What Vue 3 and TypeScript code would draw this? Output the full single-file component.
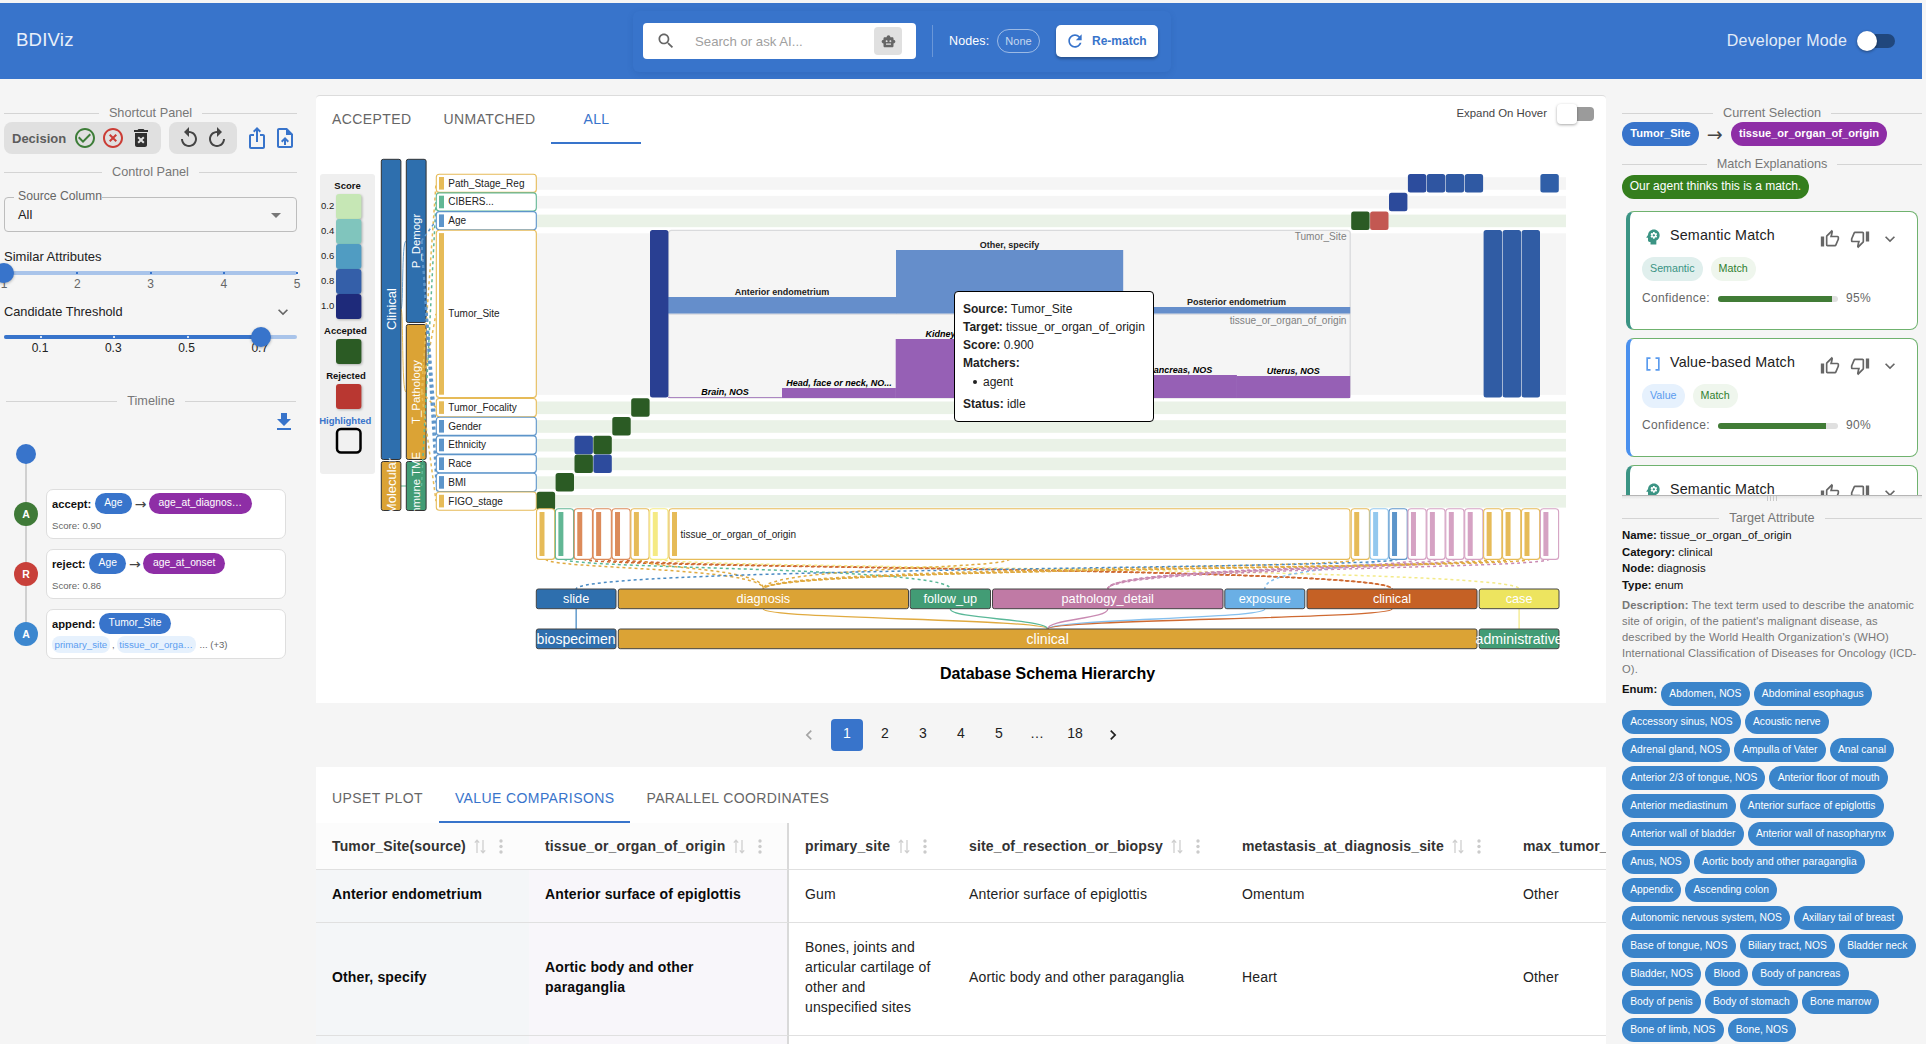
<script setup lang="ts">
interface Band { label: string; y: number; h: number; color: string; node: number; accepted: boolean }
interface Cell { x: number; row: number; fill: string }
interface Node { label: string; x: number; w: number; fill: string }

const icons = {
  search: 'M15.5 14h-.79l-.28-.27C15.41 12.59 16 11.11 16 9.5 16 5.91 13.09 3 9.5 3S3 5.91 3 9.5 5.91 16 9.5 16c1.61 0 3.09-.59 4.23-1.57l.27.28v.79l5 4.99L20.49 19l-4.99-5zm-6 0C7.01 14 5 11.99 5 9.5S7.01 5 9.5 5 14 7.01 14 9.5 11.99 14 9.5 14z',
  robot: 'M20 9V7c0-1.1-.9-2-2-2h-3c0-1.66-1.34-3-3-3S9 3.34 9 5H6c-1.1 0-2 .9-2 2v2c-1.66 0-3 1.34-3 3s1.34 3 3 3v4c0 1.1.9 2 2 2h12c1.1 0 2-.9 2-2v-4c1.66 0 3-1.34 3-3s-1.34-3-3-3M7.5 11.5c0-.83.67-1.5 1.5-1.5s1.5.67 1.5 1.5S9.83 13 9 13s-1.5-.67-1.5-1.5M16 17H8v-2h8zm-1-4c-.83 0-1.5-.67-1.5-1.5S14.17 10 15 10s1.5.67 1.5 1.5S15.83 13 15 13',
  refresh: 'M17.65 6.35C16.2 4.9 14.21 4 12 4c-4.42 0-7.99 3.58-7.99 8s3.57 8 7.99 8c3.73 0 6.84-2.55 7.73-6h-2.08c-.82 2.33-3.04 4-5.65 4-3.31 0-6-2.69-6-6s2.69-6 6-6c1.66 0 3.14.69 4.22 1.78L13 11h7V4z',
  check: 'M16.59 7.58 10 14.17l-3.59-3.58L5 12l5 5 8-8zM12 2C6.48 2 2 6.48 2 12s4.48 10 10 10 10-4.48 10-10S17.52 2 12 2m0 18c-4.42 0-8-3.58-8-8s3.58-8 8-8 8 3.58 8 8-3.58 8-8 8',
  cross: 'M14.59 8 12 10.59 9.41 8 8 9.41 10.59 12 8 14.59 9.41 16 12 13.41 14.59 16 16 14.59 13.41 12 16 9.41zM12 2C6.47 2 2 6.47 2 12s4.47 10 10 10 10-4.47 10-10S17.53 2 12 2m0 18c-4.41 0-8-3.59-8-8s3.59-8 8-8 8 3.59 8 8-3.59 8-8 8',
  trash: 'M6 19c0 1.1.9 2 2 2h8c1.1 0 2-.9 2-2V7H6zm2.46-7.12 1.41-1.41L12 12.59l2.12-2.12 1.41 1.41L13.41 14l2.12 2.12-1.41 1.41L12 15.41l-2.12 2.12-1.41-1.41L10.59 14zM15.5 4l-1-1h-5l-1 1H5v2h14V4z',
  replay: 'M12 5V1L7 6l5 5V7c3.31 0 6 2.69 6 6s-2.69 6-6 6-6-2.69-6-6H4c0 4.42 3.58 8 8 8s8-3.58 8-8-3.58-8-8-8',
  share: 'M16 5l-1.42 1.42-1.59-1.59V16h-1.98V4.83L9.42 6.42 8 5l4-4zm4 5v11c0 1.1-.9 2-2 2H6c-1.11 0-2-.9-2-2V10c0-1.11.89-2 2-2h3v2H6v11h12V10h-3V8h3c1.1 0 2 .89 2 2',
  upload: 'M14 2H6c-1.1 0-1.99.9-1.99 2L4 20c0 1.1.89 2 1.99 2H18c1.1 0 2-.9 2-2V8zm4 18H6V4h7v5h5zM8 15.01l1.41 1.41L11 14.84V19h2v-4.16l1.59 1.59L16 15.01 12.01 11z',
  download: 'M19 9h-4V3H9v6H5l7 7zM5 18v2h14v-2z',
  more: 'M16.59 8.59 12 13.17 7.41 8.59 6 10l6 6 6-6z',
  prev: 'M15.41 7.41 14 6l-6 6 6 6 1.41-1.41L10.83 12z',
  next: 'M10 6 8.59 7.41 13.17 12l-4.58 4.59L10 18l6-6z',
  drop: 'M7 10l5 5 5-5z',
  up: 'M9 21h9c.83 0 1.54-.5 1.84-1.22l3.02-7.05c.09-.23.14-.47.14-.73v-2c0-1.1-.9-2-2-2h-6.31l.95-4.57.03-.32c0-.41-.17-.79-.44-1.06L14.17 1 7.58 7.59C7.22 7.95 7 8.45 7 9v10c0 1.1.9 2 2 2M9 9l4.34-4.34L12 10h9v2l-3 7H9zM1 9h4v12H1z',
  down: 'M15 3H6c-.83 0-1.54.5-1.84 1.22l-3.02 7.05c-.09.23-.14.47-.14.73v2c0 1.1.9 2 2 2h6.31l-.95 4.57-.03.32c0 .41.17.79.44 1.06L9.83 23l6.59-6.59c.36-.36.58-.86.58-1.41V5c0-1.1-.9-2-2-2m0 12-4.34 4.34L12 14H3v-2l3-7h9zm4-12h4v12h-4z',
  array: 'M15 4v2h3v12h-3v2h5V4zM4 20h5v-2H6V6h3V4H4z',
  mind: 'M13 8.57c-.79 0-1.43.64-1.43 1.43s.64 1.43 1.43 1.43 1.43-.64 1.43-1.43-.64-1.43-1.43-1.43zM13 3C9.25 3 6.2 5.94 6.02 9.64L4.1 12.2c-.25.33-.01.8.4.8H6v3c0 1.1.9 2 2 2h1v3h7v-4.68c2.36-1.12 4-3.53 4-6.32 0-3.87-3.13-7-7-7zm3 7c0 .13-.01.26-.02.39l.83.66c.08.06.1.16.05.25l-.8 1.39c-.05.09-.16.12-.24.09l-.99-.4c-.21.16-.43.29-.67.39L14 13.83c-.01.1-.1.17-.2.17h-1.6c-.1 0-.18-.07-.2-.17l-.15-1.06c-.25-.1-.47-.23-.68-.39l-.99.4c-.09.03-.2 0-.25-.09l-.8-1.39c-.05-.08-.03-.19.05-.25l.84-.66c-.01-.13-.02-.26-.02-.39s.02-.27.04-.39l-.85-.66c-.08-.06-.1-.16-.05-.26l.8-1.38c.05-.09.15-.12.24-.09l1 .4c.2-.15.43-.29.67-.39L12 6.17c.02-.1.1-.17.2-.17h1.6c.1 0 .18.07.2.17l.15 1.06c.24.1.46.23.67.39l1-.4c.09-.03.2 0 .24.09l.8 1.38c.05.09.03.2-.05.26l-.85.66c.03.12.04.25.04.39z',
}

const ORANGE = '#e6bb58'
const GREEN = '#62b795'
const BLUE = '#5d95ca'
const RUST = '#dc8b5a'
const YELLOW = '#f5ea83'
const SKY = '#93c8ee'
const PINK = '#d5a2c3'

const scale = [
  { label: '0.2', fill: '#c6e7b5' },
  { label: '0.4', fill: '#80c5bd' },
  { label: '0.6', fill: '#509cc2' },
  { label: '0.8', fill: '#345fa9' },
  { label: '1.0', fill: '#1e2a7a' },
]

const bands: Band[] = [
  { label: 'Path_Stage_Reg', y: 174, h: 18.6, color: ORANGE, node: 392, accepted: false },
  { label: 'CIBERS...', y: 192.7, h: 18.6, color: GREEN, node: 486, accepted: false },
  { label: 'Age', y: 211.4, h: 18.6, color: BLUE, node: 241, accepted: true },
  { label: 'Tumor_Site', y: 230.1, h: 167.6, color: ORANGE, node: 392, accepted: false },
  { label: 'Tumor_Focality', y: 398.3, h: 18.6, color: ORANGE, node: 392, accepted: true },
  { label: 'Gender', y: 417, h: 18.6, color: BLUE, node: 241, accepted: true },
  { label: 'Ethnicity', y: 435.7, h: 18.6, color: BLUE, node: 241, accepted: true },
  { label: 'Race', y: 454.4, h: 18.6, color: BLUE, node: 241, accepted: true },
  { label: 'BMI', y: 473.1, h: 18.6, color: BLUE, node: 241, accepted: true },
  { label: 'FIGO_stage', y: 491.8, h: 18.6, color: ORANGE, node: 392, accepted: true },
]

const cells: Cell[] = [
  { x: 536.5, row: 9, fill: '#2b5b24' },
  { x: 555.4, row: 8, fill: '#2b5b24' },
  { x: 574.3, row: 7, fill: '#2b5b24' },
  { x: 574.3, row: 6, fill: '#2d4b9d' },
  { x: 593.2, row: 6, fill: '#2b5b24' },
  { x: 593.2, row: 7, fill: '#2d4b9d' },
  { x: 612.1, row: 5, fill: '#2b5b24' },
  { x: 631, row: 4, fill: '#2b5b24' },
  { x: 649.8, row: 3, fill: '#293f92' },
  { x: 1351, row: 2, fill: '#2b5b24' },
  { x: 1369.9, row: 2, fill: '#c35852' },
  { x: 1388.8, row: 1, fill: '#2c4a9b' },
  { x: 1407.7, row: 0, fill: '#2c4c9d' },
  { x: 1426.6, row: 0, fill: '#2f55a1' },
  { x: 1445.5, row: 0, fill: '#2f59a3' },
  { x: 1464.5, row: 0, fill: '#2f59a3' },
  { x: 1540.2, row: 0, fill: '#305fa8' },
  { x: 1483.4, row: 3, fill: '#305ca4' },
  { x: 1502.4, row: 3, fill: '#305ca4' },
  { x: 1521.4, row: 3, fill: '#305ca4' },
]

const nodes: Node[] = [
  { label: 'slide', x: 536.3, w: 79.7, fill: '#2e6fae' },
  { label: 'diagnosis', x: 618.3, w: 290.2, fill: '#dba335' },
  { label: 'follow_up', x: 910.2, w: 80.3, fill: '#429c75' },
  { label: 'pathology_detail', x: 992.5, w: 230.5, fill: '#c07aa5' },
  { label: 'exposure', x: 1224.8, w: 80, fill: '#6aafe5' },
  { label: 'clinical', x: 1307, w: 170, fill: '#c56125' },
  { label: 'case', x: 1479.2, w: 79.8, fill: '#ede45f' },
]
const groups: Node[] = [
  { label: 'biospecimen', x: 536.3, w: 79.7, fill: '#2e6fae' },
  { label: 'clinical', x: 618.3, w: 858.7, fill: '#dba335' },
  { label: 'administrative', x: 1479.2, w: 79.8, fill: '#429c75' },
]

const link: Record<string, { node: number; stroke: string }> = {
  [BLUE]: { node: 0, stroke: '#4a8bc4' },
  [ORANGE]: { node: 1, stroke: '#e0aa40' },
  [GREEN]: { node: 2, stroke: '#5ab898' },
  [PINK]: { node: 3, stroke: '#c98ab2' },
  [SKY]: { node: 4, stroke: '#86c0ee' },
  [RUST]: { node: 5, stroke: '#cf6a32' },
  [YELLOW]: { node: 6, stroke: '#f3ea88' },
}

const leftCols = [ORANGE, GREEN, RUST, RUST, RUST, ORANGE, YELLOW]
const rightCols = [ORANGE, SKY, BLUE, PINK, PINK, PINK, PINK, ORANGE, ORANGE, ORANGE, PINK]
const targets = [
  ...leftCols.map((color, i) => ({ color, x: 536.5 + i * 18.88, w: 18.2 })),
  { color: ORANGE, x: 669, w: 681 },
  ...rightCols.map((color, i) => ({ color, x: 1351.2 + i * 18.92, w: 18.2 })),
]

const mid = (n: Node) => n.x + n.w / 2
function targetPath(t: { x: number; w: number; color: string }): string {
  const a = t.x + t.w / 2
  const b = mid(nodes[link[t.color].node])
  return `M${a} 559C${a} 569 ${b} 567 ${b} 589`
}
const groupPaths = nodes.map((n, i) => {
  const g = i === 0 ? groups[0] : i === 6 ? groups[2] : groups[1]
  const a = mid(n)
  const b = mid(g)
  const stroke = Object.values(link).find((l) => l.node === i)!.stroke
  return { d: `M${a} 609C${a} 619 ${b} 619 ${b} 629`, stroke }
})
const sourcePath = (b: Band) => `M421.5 ${b.node}L436 ${b.y + b.h / 2}`

const topBars = [
  { label: 'Anterior endometrium', x: 668, w: 228, y: 297 },
  { label: 'Other, specify', x: 896, w: 227, y: 250 },
  { label: 'Posterior endometrium', x: 1123, w: 227, y: 307 },
]
const bottomBars = [
  { label: 'Brain, NOS', x: 668, y: 397.3 },
  { label: 'Head, face or neck, NO...', x: 782, y: 388 },
  { label: 'Kidney, NOS', x: 895.7, y: 339 },
  { label: '', x: 1009.4, y: 350 },
  { label: 'Pancreas, NOS', x: 1123, y: 375 },
  { label: 'Uterus, NOS', x: 1236.3, y: 376 },
]

const matches = [
  { kind: 'semantic', title: 'Semantic Match', tag: 'Semantic', pct: 95 },
  { kind: 'value', title: 'Value-based Match', tag: 'Value', pct: 90 },
  { kind: 'semantic', title: 'Semantic Match', tag: 'Semantic', pct: 90 },
]

const enumRows: string[][] = [
  ['Abdomen, NOS', 'Abdominal esophagus'],
  ['Accessory sinus, NOS', 'Acoustic nerve'],
  ['Adrenal gland, NOS', 'Ampulla of Vater', 'Anal canal'],
  ['Anterior 2/3 of tongue, NOS', 'Anterior floor of mouth'],
  ['Anterior mediastinum', 'Anterior surface of epiglottis'],
  ['Anterior wall of bladder', 'Anterior wall of nasopharynx'],
  ['Anus, NOS', 'Aortic body and other paraganglia'],
  ['Appendix', 'Ascending colon'],
  ['Autonomic nervous system, NOS', 'Axillary tail of breast'],
  ['Base of tongue, NOS', 'Biliary tract, NOS', 'Bladder neck'],
  ['Bladder, NOS', 'Blood', 'Body of pancreas'],
  ['Body of penis', 'Body of stomach', 'Bone marrow'],
  ['Bone of limb, NOS', 'Bone, NOS'],
]

const columns = ['Tumor_Site(source)', 'tissue_or_organ_of_origin', 'primary_site', 'site_of_resection_or_biopsy', 'metastasis_at_diagnosis_site', 'max_tumor_']
const rows = [
  ['Anterior endometrium', 'Anterior surface of epiglottis', 'Gum', 'Anterior surface of epiglottis', 'Omentum', 'Other'],
  ['Other, specify', 'Aortic body and other paraganglia', 'Bones, joints and articular cartilage of other and unspecified sites', 'Aortic body and other paraganglia', 'Heart', 'Other'],
  ['', '', '', '', '', ''],
]
</script>

<template>
  <div class="page">
    <header class="top">
      <div class="brand">BDIViz</div>
      <div class="tools">
        <div class="search">
          <svg class="icon" width="20" height="20" viewBox="0 0 24 24"><path :d="icons.search" /></svg>
          <span class="ph">Search or ask AI...</span>
          <span class="bot"><svg class="icon" width="15" height="15" viewBox="0 0 24 24"><path :d="icons.robot" /></svg></span>
        </div>
        <i class="vr"></i>
        <span class="nodes">Nodes:</span>
        <span class="none">None</span>
        <button class="rematch"><svg class="icon" width="20" height="20" viewBox="0 0 24 24"><path :d="icons.refresh" /></svg><span>Re-match</span></button>
      </div>
      <div class="dev"><span>Developer Mode</span><span class="sw"><i class="track"></i><i class="thumb"></i></span></div>
    </header>

    <div class="body">
      <aside class="left">
        <div class="divider"><span>Shortcut Panel</span></div>
        <div class="shortcuts">
          <div class="grp g1">
            <b>Decision</b>
            <svg class="icon green" width="24" height="24" viewBox="0 0 24 24"><path :d="icons.check" /></svg>
            <svg class="icon red" width="24" height="24" viewBox="0 0 24 24"><path :d="icons.cross" /></svg>
            <svg class="icon dark" width="24" height="24" viewBox="0 0 24 24"><path :d="icons.trash" /></svg>
          </div>
          <div class="grp g2">
            <svg class="icon gray" width="24" height="24" viewBox="0 0 24 24"><path :d="icons.replay" /></svg>
            <svg class="icon gray flip" width="24" height="24" viewBox="0 0 24 24"><path :d="icons.replay" /></svg>
          </div>
          <svg class="icon blue sh" width="24" height="24" viewBox="0 0 24 24"><path :d="icons.share" /></svg>
          <svg class="icon blue" width="24" height="24" viewBox="0 0 24 24"><path :d="icons.upload" /></svg>
        </div>
        <div class="divider cp"><span>Control Panel</span></div>
        <div class="select">
          <span class="lab">Source Column</span>
          <span>All</span>
          <svg class="icon" width="24" height="24" viewBox="0 0 24 24"><path :d="icons.drop" /></svg>
        </div>
        <div class="cap c1">Similar Attributes</div>
        <div class="slider s1">
          <i class="rail"></i>
          <i v-for="n in 4" :key="n" class="mark" :style="{ left: n * 25 + '%' }"></i>
          <span v-for="n in 5" :key="n" class="tick" :style="{ left: (n - 1) * 25 + '%' }">{{ n }}</span>
          <i class="knob" style="left: 0"></i>
        </div>
        <div class="cap c2"><span>Candidate Threshold</span><svg class="icon" width="20" height="20" viewBox="0 0 24 24"><path :d="icons.more" /></svg></div>
        <div class="slider s2">
          <i class="rail"></i><i class="fill"></i>
          <i v-for="n in 3" :key="n" class="mark lt" :style="{ left: n * 25 - 12.3 + '%' }"></i>
          <span v-for="(t, n) in ['0.1', '0.3', '0.5', '0.7']" :key="t" class="tick dk" :style="{ left: n * 25 + 12.3 + '%' }">{{ t }}</span>
          <i class="knob" style="left: 87.6%"></i>
        </div>
        <div class="divider tl"><span>Timeline</span></div>
        <div class="dl"><svg class="icon blue" width="24" height="24" viewBox="0 0 24 24"><path :d="icons.download" /></svg></div>
        <div class="timeline">
          <div class="ev start"><i class="dot s"></i></div>
          <div class="ev">
            <span class="dot g">A</span>
            <div class="evc">
              <div class="l1"><b>accept:</b><span class="pill b">Age</span><span class="ar">→</span><span class="pill p">age_at_diagnos…</span></div>
              <div class="l2">Score: 0.90</div>
            </div>
          </div>
          <div class="ev">
            <span class="dot r">R</span>
            <div class="evc">
              <div class="l1"><b>reject:</b><span class="pill b">Age</span><span class="ar">→</span><span class="pill p">age_at_onset</span></div>
              <div class="l2">Score: 0.86</div>
            </div>
          </div>
          <div class="ev">
            <span class="dot l">A</span>
            <div class="evc">
              <div class="l1"><b>append:</b><span class="pill b">Tumor_Site</span></div>
              <div class="l2 tags"><em>primary_site</em><span class="cm">,</span><em>tissue_or_orga…</em><span class="ex">... (+3)</span></div>
            </div>
          </div>
        </div>
      </aside>

      <main class="main">
        <section class="card">
          <nav class="tabs">
            <span class="tab">ACCEPTED</span><span class="tab">UNMATCHED</span><span class="tab on all">ALL</span>
            <div class="hov"><span>Expand On Hover</span><span class="sq"><i class="t"></i><i class="k"></i></span></div>
          </nav>
          <svg class="chart" width="1290" height="557" viewBox="316 145 1290 557">
            <rect x="320" y="174" width="55" height="300" rx="3" fill="#efefef" />
            <g class="lg">
              <text x="347.5" y="189" class="b" text-anchor="middle">Score</text>
              <g v-for="(s, i) in scale" :key="s.label">
                <rect x="336" :y="194 + i * 25" width="25.4" height="25" rx="3" :fill="s.fill" class="sh" />
                <text x="321" :y="209 + i * 25">{{ s.label }}</text>
              </g>
              <text x="345.5" y="334" class="b" text-anchor="middle">Accepted</text>
              <rect x="336" y="339" width="25.4" height="25" rx="3" fill="#2b5b24" class="sh" />
              <text x="346" y="379" class="b" text-anchor="middle">Rejected</text>
              <rect x="336" y="384" width="25.4" height="25" rx="3" fill="#b93731" class="sh" />
              <text x="345.3" y="424" class="b hl" text-anchor="middle">Highlighted</text>
              <rect x="337" y="429" width="23.5" height="23.5" rx="4" fill="#f1f1f1" stroke="#000" stroke-width="2.5" />
            </g>

            <g fill="none" stroke-width="1">
              <path d="M401 309C403.5 309 401.5 241 406 241" stroke="#6fa3d0" />
              <path d="M401 309C403.5 309 401.5 392 406 392" stroke="#e8bc57" />
              <path d="M401 486H406" stroke="#62b795" />
            </g>
            <g stroke="#333" stroke-width="1">
              <rect x="381.3" y="159.3" width="19.6" height="300.2" rx="2" fill="#2e6fae" />
              <rect x="381.3" y="461.5" width="19.6" height="49" rx="2" fill="#dba335" />
              <rect x="406.3" y="159.3" width="19.8" height="163.2" rx="2" fill="#2e6fae" />
              <rect x="406.3" y="324.5" width="19.8" height="135" rx="2" fill="#dba335" />
              <rect x="406.3" y="461.5" width="19.8" height="49" rx="2" fill="#429c75" />
            </g>
            <g fill="none" stroke-width="1.5" stroke-dasharray="3 3">
              <path v-for="b in bands" :key="'p' + b.label" :d="sourcePath(b)" :stroke="b.label === 'Age' || b.color !== BLUE ? b.color : '#5d95ca'" />
            </g>
            <g fill="#fff" text-anchor="middle">
              <text transform="translate(395.5 309) rotate(-90)" font-size="13">Clinical</text>
              <text transform="translate(395.5 486) rotate(-90)" font-size="13">Molecular</text>
              <text transform="translate(420.3 241) rotate(-90)" font-size="11.4">P_Demogr</text>
              <text transform="translate(420.3 392) rotate(-90)" font-size="11.4">T_Pathology</text>
              <text transform="translate(420.3 486) rotate(-90)" font-size="11.4">Immune TME</text>
            </g>

            <g v-for="b in bands" :key="b.label">
              <rect x="536" :y="b.y + 3.2" width="1030" :height="b.h - 6" :fill="b.accepted ? '#eaf2e7' : '#f5f5f5'" />
              <rect x="436.3" :y="b.y + 0.2" width="100" :height="b.h - 0.4" rx="3" fill="#fff" :stroke="b.color" stroke-width="1.1" />
              <rect x="439" :y="b.y + 3" width="5" :height="b.h - 6" :fill="b.color" />
              <text x="448.3" :y="b.y + b.h / 2 + 3.4" font-size="10" fill="#222">{{ b.label }}</text>
            </g>

            <rect x="668.5" y="230.3" width="681.7" height="167.6" rx="3" fill="#f5f5f5" stroke="#d9dadc" stroke-width="1.3" />
            <path d="M668.5 314H1350" stroke="#c9cad2" stroke-width="1" />
            <g font-size="9" text-anchor="middle" font-weight="700">
              <g v-for="t in topBars" :key="t.label">
                <rect :x="t.x" :y="t.y" :width="t.w + 0.2" :height="313.5 - t.y" fill="#658ecb" />
                <text :x="t.x + t.w / 2" :y="t.y - 2" fill="#222">{{ t.label }}</text>
              </g>
              <g v-for="t in bottomBars" :key="t.label" font-style="italic">
                <rect :x="t.x" :y="t.y" width="113.9" :height="398 - t.y" fill="#9660b5" />
                <text v-if="t.label" :x="t.x + 57" :y="t.y - 2.2" fill="#000">{{ t.label }}</text>
              </g>
            </g>
            <text x="1346.5" y="240" class="cap-t">Tumor_Site</text>
            <text x="1346.5" y="324" class="cap-t">tissue_or_organ_of_origin</text>

            <rect v-for="(c, i) in cells" :key="'c' + i" :x="c.x + 0.2" :y="bands[c.row].y" width="18.4" :height="bands[c.row].h - 0.1" rx="2.5" :fill="c.fill" />

            <g fill="none" stroke-width="1.5" stroke-dasharray="3 3">
              <path v-for="(t, i) in targets" :key="'l' + i" :d="targetPath(t)" :stroke="link[t.color].stroke" />
            </g>
            <g v-for="(t, i) in targets" :key="'t' + i">
              <rect :x="t.x" y="508.8" :width="t.w" height="50.6" rx="3" fill="#fff" :stroke="t.color" stroke-width="1.1" />
              <rect :x="t.x + 3" y="512" width="5" height="44" :fill="t.color" />
            </g>
            <text x="680.5" y="538" font-size="10" fill="#222">tissue_or_organ_of_origin</text>

            <path v-for="(g, i) in groupPaths" :key="'g' + i" :d="g.d" fill="none" :stroke="g.stroke" stroke-width="1.3" />
            <g v-for="n in nodes" :key="n.label" text-anchor="middle">
              <rect :x="n.x" y="589" :width="n.w" height="19.7" rx="2" :fill="n.fill" stroke="#444" stroke-width="1" />
              <text :x="mid(n)" y="603.2" font-size="12.7" fill="#fff">{{ n.label }}</text>
            </g>
            <g v-for="n in groups" :key="'r' + n.label" text-anchor="middle">
              <rect :x="n.x" y="629" :width="n.w" height="19.7" rx="2" :fill="n.fill" stroke="#444" stroke-width="1" />
              <text :x="mid(n)" y="644" font-size="14.1" fill="#fff">{{ n.label }}</text>
            </g>
            <text x="1047.5" y="679" text-anchor="middle" font-size="16" font-weight="700" fill="#000">Database Schema Hierarchy</text>
          </svg>
          <div class="tip">
            <div><b>Source:</b> Tumor_Site</div>
            <div><b>Target:</b> tissue_or_organ_of_origin</div>
            <div><b>Score:</b> 0.900</div>
            <div><b>Matchers:</b></div>
            <div class="li"><i></i>agent</div>
            <div><b>Status:</b> idle</div>
          </div>
        </section>

        <nav class="pager">
          <span class="pg off"><svg class="icon" width="20" height="20" viewBox="0 0 24 24"><path :d="icons.prev" /></svg></span>
          <span v-for="p in ['1', '2', '3', '4', '5', '…', '18']" :key="p" class="pg" :class="{ cur: p === '1' }">{{ p }}</span>
          <span class="pg"><svg class="icon" width="20" height="20" viewBox="0 0 24 24"><path :d="icons.next" /></svg></span>
        </nav>

        <section class="panel2">
          <nav class="tabs t2"><span class="tab">UPSET PLOT</span><span class="tab on">VALUE COMPARISONS</span><span class="tab">PARALLEL COORDINATES</span></nav>
          <div class="grid">
            <div v-for="(c, i) in columns" :key="c" class="th" :class="'k' + i">
              <span>{{ c }}</span>
              <template v-if="i < 5">
                <svg class="sort" width="12" height="15" viewBox="0 0 12 15"><path d="M3 14V2M.8 3.6 3 1.2l2.2 2.4M9 1v12M6.8 11.4 9 13.8l2.2-2.4" /></svg>
                <svg class="dots" width="4" height="15" viewBox="0 0 4 15"><circle cx="2" cy="2" r="1.7" /><circle cx="2" cy="7.5" r="1.7" /><circle cx="2" cy="13" r="1.7" /></svg>
              </template>
            </div>
            <template v-for="(r, j) in rows" :key="j">
              <div v-for="(c, i) in r" :key="j + '-' + i" class="td" :class="'k' + i">{{ c }}</div>
            </template>
          </div>
        </section>
      </main>

      <aside class="right">
        <div class="divider"><span>Current Selection</span></div>
        <div class="sel"><span class="chip b">Tumor_Site</span><span class="ar">→</span><span class="chip p">tissue_or_organ_of_origin</span></div>
        <div class="divider me"><span>Match Explanations</span></div>
        <div class="agent">Our agent thinks this is a match.</div>
        <div class="list">
          <article v-for="(m, i) in matches" :key="i" class="match" :class="m.kind">
            <div class="mh">
              <svg class="icon ty" width="20" height="20" viewBox="0 0 24 24"><path fill-rule="evenodd" :d="m.kind === 'value' ? icons.array : icons.mind" /></svg>
              <span class="mt">{{ m.title }}</span>
              <svg class="icon a" width="20" height="20" viewBox="0 0 24 24"><path :d="icons.up" /></svg>
              <svg class="icon a" width="20" height="20" viewBox="0 0 24 24"><path :d="icons.down" /></svg>
              <svg class="icon a" width="20" height="20" viewBox="0 0 24 24"><path :d="icons.more" /></svg>
            </div>
            <div class="mtags"><span class="tg">{{ m.tag }}</span><span class="tg ok">Match</span></div>
            <div class="conf"><span>Confidence:</span><i class="bar"><i :style="{ width: m.pct + '%' }"></i></i><span>{{ m.pct }}%</span></div>
          </article>
        </div>
        <div class="split"><i></i><i></i><i></i><i></i></div>
        <div class="divider ta"><span>Target Attribute</span></div>
        <div class="kv"><b>Name:</b> tissue_or_organ_of_origin</div>
        <div class="kv"><b>Category:</b> clinical</div>
        <div class="kv"><b>Node:</b> diagnosis</div>
        <div class="kv"><b>Type:</b> enum</div>
        <p class="desc"><b>Description:</b> The text term used to describe the anatomic<br>site of origin, of the patient's malignant disease, as<br>described by the World Health Organization's (WHO)<br>International Classification of Diseases for Oncology (ICD-<br>O).</p>
        <div class="enum">
          <div v-for="(r, i) in enumRows" :key="i" class="er">
            <b v-if="i === 0">Enum:</b>
            <span v-for="e in r" :key="e">{{ e }}</span>
          </div>
        </div>
      </aside>
    </div>
  </div>
</template>

<style>
body { margin: 0; background: #f5f5f5; overflow: hidden; }
</style>

<style scoped>
* { box-sizing: border-box; }
.page { width: 1926px; height: 1044px; overflow: hidden; background: #f5f5f5; font-family: "Liberation Sans", Arial, sans-serif; color: #222; padding-top: 3px; white-space: nowrap; }
.icon { display: block; fill: currentColor; flex: none; }
i { display: block; font-style: normal; }
.top { width: 1922px; height: 76px; background: #3874cb; color: #fff; display: flex; align-items: center; }
.brand { width: 633px; flex: none; padding: 0 0 2px 16px; font-size: 18.6px; color: #e9f0fa; letter-spacing: .2px; }
.tools { width: 538px; flex: none; height: 61px; padding-left: 10px; display: flex; align-items: center; box-shadow: 0 2px 6px rgba(20, 60, 130, .16); border-radius: 6px; }
.search { width: 273px; height: 36px; background: #fff; border-radius: 4px; display: flex; align-items: center; padding: 0 14px 0 13px; color: #666; }
.ph { flex: 1; margin-left: 19px; font-size: 13.2px; color: #a0a0a0; }
.bot { width: 28px; height: 28px; border-radius: 4px; background: #e0e0e0; display: flex; align-items: center; justify-content: center; }
.vr { width: 1px; height: 32px; background: rgba(255, 255, 255, .25); margin: 0 16px 0 16px; }
.nodes { font-size: 12.5px; width: 48px; letter-spacing: .1px; padding-bottom: 1px; }
.none { width: 43px; height: 24px; border: 1px solid rgba(255, 255, 255, .5); border-radius: 12px; font-size: 11px; line-height: 22px; text-align: center; color: rgba(255, 255, 255, .72); }
.rematch { margin-left: 16px; width: 102px; height: 32px; border: 0; border-radius: 5px; background: #fff; color: #3874cb; font: 700 12px "Liberation Sans", Arial, sans-serif; display: flex; align-items: center; padding: 0 0 0 9px; gap: 7px; box-shadow: 0 2px 3px rgba(0, 0, 0, .3); }
.dev { flex: 1; display: flex; align-items: center; justify-content: flex-end; padding-right: 27px; font-size: 16px; color: #e3ecf8; letter-spacing: .2px; }
.sw { position: relative; width: 38px; height: 20px; margin-left: 10px; }
.sw .track { position: absolute; left: 4px; right: 0; top: 3px; height: 14px; border-radius: 7px; background: #20477d; }
.sw .thumb { position: absolute; left: 0; top: 0; width: 20px; height: 20px; border-radius: 50%; background: #fff; box-shadow: 0 1px 3px rgba(0, 0, 0, .4); }

.body { display: flex; height: 965px; }
.left { width: 316px; padding: 25px 0 0 4px; flex: none; }
.divider { display: flex; align-items: center; gap: 10px; height: 18px; font-size: 12.7px; color: #777; }
.divider::before, .divider::after { content: ""; flex: 1; height: 1px; background: #d4d4d4; }
.left .divider { width: 293px; }
.shortcuts { display: flex; align-items: center; height: 32px; }
.grp { height: 32px; border-radius: 8px; background: #e0e0e0; display: flex; align-items: center; }
.g1 { width: 157px; padding-left: 8px; gap: 4px; margin-right: 8px; }
.g1 b { font-size: 13px; color: #5c5c5c; width: 57px; }
.g2 { width: 68px; padding-left: 8px; gap: 4px; margin-right: 8px; }
.sh { margin-right: 4px; }
.flip { transform: scaleX(-1); }
.green { color: #3d7d38; } .red { color: #cb3c35; } .dark { color: #303030; } .gray { color: #444; } .blue { color: #3874cb; }
.left .cp { margin-top: 9px; }
.select { position: relative; width: 293px; height: 35px; margin-top: 16px; border: 1px solid #bdbdbd; border-radius: 4px; display: flex; align-items: center; justify-content: space-between; padding: 0 8px 0 13px; font-size: 12.8px; }
.select .icon { color: #777; }
.lab { position: absolute; left: 9px; top: -11px; padding: 0 0 0 4px; font-size: 12.2px; line-height: 18px; background: #f5f5f5; color: #666; }
.cap { height: 18px; line-height: 18px; font-size: 13px; width: 293px; }
.c1 { margin-top: 16px; }
.c2 { margin-top: 5px; display: flex; justify-content: space-between; align-items: center; font-size: 12.8px; padding-right: 4px; }
.c2 .icon { color: #666; }
.slider { position: relative; width: 293px; height: 32px; }
.rail, .fill, .mark, .tick, .knob { position: absolute; }
.rail { left: 0; right: 0; top: 5px; height: 4px; border-radius: 2px; background: #a9c4ea; }
.mark { width: 2px; height: 2px; margin-left: -1px; top: 6px; background: #3874cb; }
.mark.lt { background: #d6e4f7; }
.tick { top: 10px; width: 30px; margin-left: -15px; text-align: center; font-size: 12px; line-height: 16px; color: #666; }
.tick.dk { color: #222; top: 19px; margin-left: -15px; }
.knob { width: 20px; height: 20px; margin-left: -10px; top: -3px; border-radius: 50%; background: #3874cb; box-shadow: 0 1px 3px rgba(0, 0, 0, .3); }
.s2 { height: 71px; }
.s2 .rail, .s2 .fill { top: 14px; height: 4px; }
.s2 .fill { left: 0; width: 87.6%; background: #3874cb; border-radius: 2px; }
.s2 .mark { top: 15px; }
.s2 .knob { top: 6px; }
.left .tl { margin-left: 2px; width: 290px; }
.dl { height: 24px; display: flex; padding-left: 268px; }
.timeline { position: relative; display: flex; flex-direction: column; gap: 10px; }
.timeline::before { content: ""; position: absolute; left: 21px; top: 20px; width: 2px; height: 180px; background: #d0d0d0; }
.ev { position: relative; height: 50px; display: flex; align-items: center; }
.ev.start { height: 40px; margin-bottom: 5px; }
.dot { width: 24px; height: 24px; margin: 0 8px 0 10px; border-radius: 50%; color: #fff; font-size: 10.5px; font-weight: 700; line-height: 24px; text-align: center; }
.dot.s { width: 20px; height: 20px; margin-left: 12px; background: #3874cb; }
.dot.g { background: #3f7a38; } .dot.r { background: #c8403a; } .dot.l { background: #3c87cf; }
.evc { width: 240px; height: 50px; border: 1px solid #dedede; border-radius: 7px; background: #fff; padding: 3px 0 0 5px; }
.l1 { display: flex; align-items: center; height: 21px; }
.l1 b { font-size: 11.2px; color: #111; margin-right: 3.5px; }
.pill { height: 21px; line-height: 20px; border-radius: 11px; padding: 0 9.5px; font-size: 10.3px; color: #fff; }
.pill.b, .chip.b { background: #3874cb; } .pill.p, .chip.p { background: #8e2ea6; }
.ar { font-family: "DejaVu Sans", sans-serif; font-size: 14px; width: 17px; text-align: center; color: #444; line-height: 20px; }
.l2 { height: 20px; margin-top: 1px; line-height: 22px; font-size: 9.6px; color: #666; }
.tags { display: flex; align-items: center; line-height: 17px; margin-top: 0; }
.tags em { font-style: normal; height: 17px; border-radius: 8px; background: #e6f1fd; color: #5c9df0; padding: 0 2.5px; font-size: 9.7px; }
.cm { width: 7px; text-align: center; } .ex { margin-left: 4px; }

.main { width: 1290px; flex: none; overflow: hidden; padding-top: 16px; }
.card { position: relative; height: 608px; background: #fff; border-top: 1px solid #dcdcdc; border-radius: 4px 4px 0 0; }
.tabs { display: flex; height: 49px; }
.tab { height: 48px; line-height: 47px; padding: 0 16px; font-size: 14px; letter-spacing: .4px; color: #666; }
.tab.on { color: #3874cb; border-bottom: 2px solid #3874cb; }
.tab.all { width: 90px; text-align: center; }
.hov { margin-left: auto; display: flex; align-items: flex-start; padding: 8px 12px 0 0; font-size: 11.4px; line-height: 18px; color: #444; }
.sq { position: relative; width: 37px; height: 20px; margin-left: 10px; }
.sq .t { position: absolute; left: 10px; right: 0; top: 3px; height: 14px; border-radius: 4px; background: #9b9b9b; }
.sq .k { position: absolute; left: 0; top: 0; width: 20px; height: 20px; border-radius: 4px; background: #fff; box-shadow: 0 1px 3px rgba(0, 0, 0, .35); }
.chart { display: block; }
.lg text { font-size: 9.5px; fill: #222; }
.lg .b { font-weight: 700; fill: #111; }
.lg .hl { fill: #3874cb; }
.lg .sh { filter: drop-shadow(1px 1px 1px rgba(0, 0, 0, .25)); }
.cap-t { font-size: 10.1px; fill: #808080; text-anchor: end; }
.tip { position: absolute; left: 638px; top: 195px; width: 200px; height: 131px; background: #fff; border: 1px solid #000; border-radius: 4px; padding: 8px; font-size: 12px; line-height: 18px; color: #222; }
.tip .li { display: flex; align-items: center; gap: 6px; height: 20px; margin-bottom: 3px; padding-left: 10px; }
.tip .li i { width: 4px; height: 4px; border-radius: 50%; background: #222; }
.pager { height: 64px; display: flex; align-items: center; gap: 6px; padding-left: 477px; }
.pg { width: 32px; height: 32px; border-radius: 4px; font-size: 14px; line-height: 29px; text-align: center; color: #222; }
.pg .icon { margin: 6px; }
.off { color: #a5a5a5; }
.cur { background: #3874cb; color: #fff; }
.panel2 { height: 290px; background: #fff; overflow: hidden; }
.t2 { height: 56px; }
.t2 .tab { height: 56px; line-height: 62px; }
.grid { display: grid; width: 1400px; grid-template-columns: 213px 260px 164px 273px 281px 209px; grid-template-rows: 47px 53px 113px 60px; font-size: 14px; letter-spacing: .15px; }
.th, .td { padding: 0 16px; display: flex; align-items: center; border-bottom: 1px solid #e0e0e0; }
.th { font-weight: 700; color: #333; letter-spacing: .15px; }
.td { white-space: normal; line-height: 20px; color: #222; padding-bottom: 4px; }
.td.k0, .td.k1 { font-weight: 700; color: #0a0a0a; letter-spacing: .15px; }
.th.k0, .th.k1 { background: #fcfcfc; }
.td.k0 { background: #f4f6f8; } .td.k1 { background: #f8f6fa; }
.k1 { border-right: 2px solid #d9d9d9; }
.sort { margin-left: 8px; fill: none; stroke: #cfcfcf; stroke-width: 1.3; }
.dots { margin-left: 13px; fill: #cbcbcb; }

.right { width: 320px; padding: 25px 4px 0 16px; height: 965px; overflow: hidden; }
.right .me { margin-top: 9px; }
.sel { display: flex; align-items: center; height: 24px; }
.sel .ar { width: 32px; font-size: 19px; }
.chip { height: 24px; line-height: 23px; padding: 0 8.3px; border-radius: 12px; color: #fff; font-size: 11.1px; font-weight: 700; }
.agent { width: 187px; height: 24px; margin-top: 2px; border-radius: 12px; background: #347e1d; color: #fff; font-size: 12px; line-height: 22px; text-align: center; }
.list { height: 296px; padding: 12px 4px 0; overflow: hidden; display: flex; flex-direction: column; gap: 8px; }
.match { height: 119px; flex: none; background: #fff; border: 1px solid #6fb26e; border-left: 4px solid #3b9484; border-radius: 8px; padding: 13px 7px 0 12px; }
.match.value { border-left-color: #4a90ee; }
.mh { display: flex; align-items: center; height: 28px; }
.ty { color: #3b9484; margin: -5px 7px 0 1px; }
.value .ty { color: #5a9bee; }
.mt { flex: 1; font-size: 14.3px; letter-spacing: .17px; margin-top: -8px; }
.a { color: #666; margin-right: 10px; }
.mtags { display: flex; gap: 8px; margin-top: 4px; height: 24px; }
.tg { height: 24px; border-radius: 12px; padding: 0 8px; line-height: 23px; font-size: 10.7px; background: #e0efed; color: #3b9484; }
.value .tg { background: #e6f1fd; color: #5a9bee; }
.match .tg.ok { background: #eff6ed; color: #2f8030; }
.conf { display: flex; align-items: center; height: 18px; margin-top: 8px; font-size: 12px; letter-spacing: .35px; color: #666; }
.bar { width: 120px; height: 6px; margin: 2px 8px 0; border-radius: 3px; background: #e0e0e0; overflow: hidden; }
.bar i { height: 6px; background: #417c36; }
.split { height: 6px; border-top: 1px solid #b5b5b5; background: linear-gradient(#e4e4e4, #f5f5f5 70%); display: flex; gap: 2px; justify-content: center; }
.split i { width: 1px; height: 5px; background: #c9c9c9; }
.right .ta { margin-top: 8px; }
.kv { height: 16.6px; line-height: 16.6px; font-size: 11.4px; color: #111; }
.desc { margin: 4px 0 0; font-size: 11.2px; line-height: 16px; color: #777; letter-spacing: .1px; }
.enum { margin-top: 5px; }
.er { display: flex; gap: 4px; height: 28px; align-items: flex-start; }
.er b { font-size: 11.3px; line-height: 15px; color: #111; }
.er span { height: 24px; line-height: 23px; border-radius: 12px; padding: 0 8.2px; background: #3a84ca; color: #fff; font-size: 10.3px; }
</style>
